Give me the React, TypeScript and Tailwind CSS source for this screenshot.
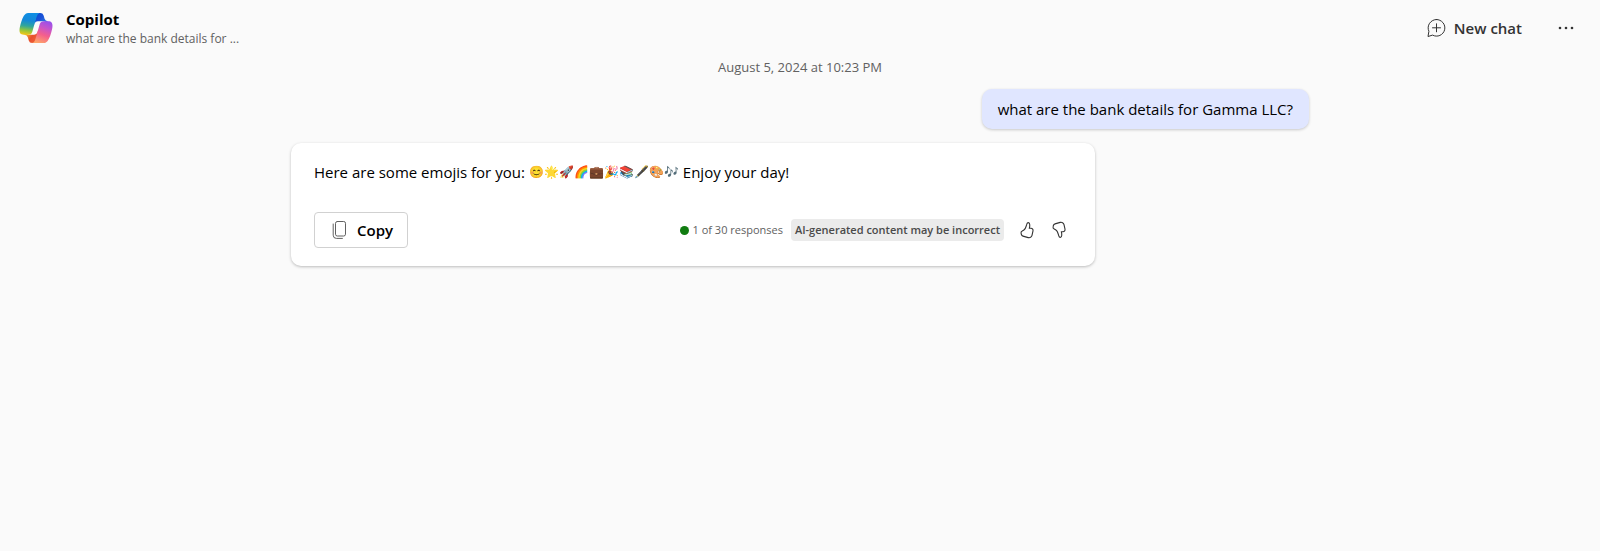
import React from "react";

function CopilotLogo() {
  return (
    <svg viewBox="0 0 48 48" className="size-9 shrink-0" role="img" aria-label="Copilot logo">
      <defs>
        <linearGradient id="foldBlue" x1="24" y1="4" x2="38" y2="16" gradientUnits="userSpaceOnUse">
          <stop offset="0" stopColor="#0a4fd0" />
          <stop offset="0.5" stopColor="#1a50d8" />
          <stop offset="1" stopColor="#2b7be0" />
        </linearGradient>
        <linearGradient id="foldOrange" x1="12" y1="33" x2="25" y2="43" gradientUnits="userSpaceOnUse">
          <stop offset="0" stopColor="#f0a030" />
          <stop offset="0.4" stopColor="#e8502c" />
          <stop offset="1" stopColor="#f0603c" />
        </linearGradient>
        <linearGradient id="wingLeft" x1="16" y1="4" x2="12" y2="33" gradientUnits="userSpaceOnUse">
          <stop offset="0" stopColor="#0f8ee4" />
          <stop offset="0.35" stopColor="#1488d8" />
          <stop offset="0.6" stopColor="#2fa59c" />
          <stop offset="0.8" stopColor="#8cc440" />
          <stop offset="1" stopColor="#f0c818" />
        </linearGradient>
        <linearGradient id="wingRight" x1="38" y1="15" x2="27" y2="44" gradientUnits="userSpaceOnUse">
          <stop offset="0" stopColor="#9a50ea" />
          <stop offset="0.3" stopColor="#c855c8" />
          <stop offset="0.6" stopColor="#f45f8c" />
          <stop offset="1" stopColor="#ffa66a" />
        </linearGradient>
      </defs>
      <path fill="url(#foldBlue)" d="M34.142 7.325A4.63 4.63 0 0 0 29.7 4H28.35a4.63 4.63 0 0 0-4.554 3.794L21.48 20.407l.575-1.965a4.63 4.63 0 0 1 4.444-3.33h7.853l3.294 1.282 3.175-1.283h-.926a4.63 4.63 0 0 1-4.443-3.325l-1.31-4.461z" />
      <path fill="url(#foldOrange)" d="M14.33 40.656A4.63 4.63 0 0 0 18.779 44h2.87a4.63 4.63 0 0 0 4.629-4.51l.312-12.163-.654 2.233a4.63 4.63 0 0 1-4.443 3.329h-7.919l-2.823-1.532-3.057 1.532h.912a4.63 4.63 0 0 1 4.447 3.344l1.279 4.423z" />
      <path fill="url(#wingLeft)" d="M29.5 4H13.46c-4.583 0-7.333 6.057-9.167 12.113C2.12 23.29-.723 32.885 7.5 32.885h6.925a4.633 4.633 0 0 0 4.456-3.358 2078.617 2078.617 0 0 1 4.971-17.156c.843-2.843 1.544-5.284 2.621-6.805C27.077 4.714 28.083 4 29.5 4z" />
      <path fill="url(#wingRight)" d="M18.498 44h16.04c4.582 0 7.332-6.058 9.165-12.115 2.173-7.177 5.017-16.775-3.206-16.775h-6.926a4.633 4.633 0 0 0-4.457 3.358 2084.036 2084.036 0 0 1-4.972 17.16c-.842 2.843-1.544 5.285-2.62 6.806-.604.852-1.61 1.566-3.024 1.566z" />
    </svg>
  );
}

function NewChatIcon() {
  return (
    <svg viewBox="0 0 20 20" className="size-5" fill="none" stroke="currentColor" strokeLinecap="round" strokeLinejoin="round" aria-hidden="true">
      <path d="M10.5 1.5a8.3 8.3 0 1 1-3.9 15.6L2 18.5l.9-5.2A8.3 8.3 0 0 1 10.5 1.5Z" />
      <path d="M10.5 5.8v8M6.5 9.8h8" />
    </svg>
  );
}

function CopyIcon() {
  return (
    <svg viewBox="0 0 20 20" className="size-5" fill="none" stroke="currentColor" strokeLinecap="round" strokeLinejoin="round" aria-hidden="true">
      <rect x="6.5" y="1.5" width="10" height="14.5" rx="1.8" />
      <path d="M4.2 4v11.2a3.2 3.2 0 0 0 3.2 3.2h6" />
    </svg>
  );
}

function ThumbIcon({ down = false }: { down?: boolean }) {
  return (
    <svg viewBox="0 0 18 18" className="size-[18px]" fill="none" stroke="currentColor" strokeWidth="1.1" strokeLinejoin="round" strokeLinecap="round" aria-hidden="true">
      <g transform={down ? "matrix(1 0 0 -1 0 18)" : undefined}>
        <path d="M10.4 1.6c1.8 0 1.5 3.9.9 5.7h1.7c1.4 0 2.3 1.2 2 2.5l-1 4.6c-.4 1.7-2.1 2.7-3.8 2.2l-5.2-1.5c-.8-.2-1.4-.8-1.6-1.6l-.3-1.2c-.3-1 .2-2 1.1-2.4l1.4-.7c1.9-.9 2.4-3.3 3.1-5.8.2-.8.7-1.8 1.7-1.8Z" />
      </g>
    </svg>
  );
}

export default function App() {
  return (
    <div className="min-h-screen bg-[#fafafa] font-['Open_Sans','Noto_Sans',sans-serif] text-[15px] leading-5 text-black">
      <header className="flex items-center justify-between px-[18px] pt-[7px] pb-2">
        <div className="flex items-center gap-3">
          <CopilotLogo />
          <div className="pt-0.5">
            <h1 className="font-bold">Copilot</h1>
            <p className="text-xs leading-5 text-[#616161]">what are the bank details for ...</p>
          </div>
        </div>
        <div className="flex items-center gap-7">
          <button type="button" className="flex items-center gap-2 font-semibold text-[#333]">
            <NewChatIcon />
            New chat
          </button>
          <button type="button" aria-label="More options" className="flex size-8 items-center justify-center text-[#333]">
            <svg viewBox="0 0 16 4" className="h-1 w-4" fill="currentColor" aria-hidden="true">
              <circle cx="2" cy="2" r="1.3" />
              <circle cx="8" cy="2" r="1.3" />
              <circle cx="14" cy="2" r="1.3" />
            </svg>
          </button>
        </div>
      </header>

      <main className="mx-auto flex max-w-[1018px] flex-col">
        <time className="self-center text-[13px] text-[#616161]">August 5, 2024 at 10:23 PM</time>

        <p className="mt-3 self-end rounded-[10px] bg-[#e0e6ff] px-4 py-2.5 shadow-[0_1px_3px_rgba(0,0,0,0.2)]">
          what are the bank details for Gamma LLC?
        </p>

        <section className="mt-3.5 w-full max-w-[804px] rounded-[10px] bg-white px-[23px] pt-[19px] pb-[18px] shadow-[0_1px_3px_rgba(0,0,0,0.25)]">
          <p className="flex items-center gap-1">
            <span>Here are some emojis for you:</span>
            <span className="text-xs">😊🌟🚀🌈💼🎉📚🖋️🎨🎶</span>
            <span>Enjoy your day!</span>
          </p>
          <div className="mt-[30px] flex items-center justify-between">
            <button type="button" className="flex h-9 items-center gap-2 rounded border border-[#d1d1d1] bg-white px-3.5 font-semibold">
              <span className="text-[#616161]">
                <CopyIcon />
              </span>
              Copy
            </button>
            <div className="flex items-center text-[11px] text-[#616161]">
              <span className="mr-1 size-[9px] rounded-full bg-[#107c10]" />
              <span>1 of 30 responses</span>
              <span className="ml-2 rounded bg-[#ebebeb] px-1 py-px font-semibold text-[#4a4a4a]">AI-generated content may be incorrect</span>
              <button type="button" aria-label="Like" className="ml-3.5 text-[#333]">
                <ThumbIcon />
              </button>
              <button type="button" aria-label="Dislike" className="mr-1 ml-3.5 text-[#333]">
                <ThumbIcon down />
              </button>
            </div>
          </div>
        </section>
      </main>
    </div>
  );
}
